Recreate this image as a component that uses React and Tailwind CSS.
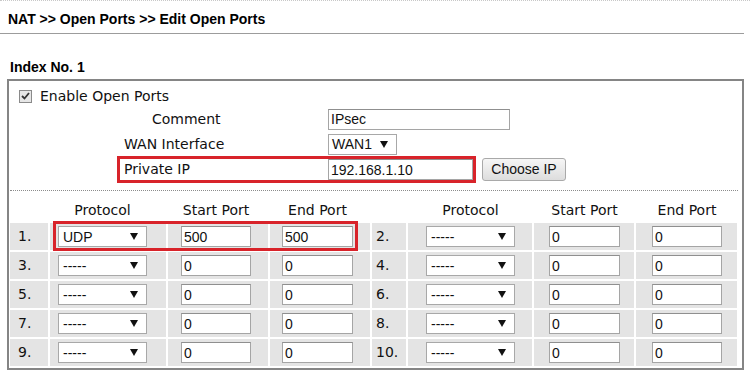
import React from "react";

const lbl = "font-['DejaVu_Sans','Verdana',sans-serif] text-[14px] text-[#111]";
const arial = "font-['Liberation_Sans','Arial',sans-serif] text-[14px] text-[#111]";

function Arrow() {
  return (
    <svg width="8" height="7" viewBox="0 0 8 7" className="shrink-0">
      <polygon points="0,0 8,0 4,7" fill="#111" />
    </svg>
  );
}

function Sel({ className, text }) {
  return (
    <div
      className={`flex h-[21px] items-center justify-between border border-[#a8a8a8] bg-white pl-[4px] pr-[8px] ${arial} ${className}`}
    >
      <span className="leading-none">{text}</span>
      <Arrow />
    </div>
  );
}

function Inp({ className, value }) {
  return (
    <div
      className={`flex h-[21px] items-center border border-[#a5a5a5] border-t-[#8f8f8f] bg-white pl-[2px] ${arial} ${className}`}
    >
      <span className="leading-none">{value}</span>
    </div>
  );
}

const grid =
  "grid grid-cols-[38px_116px_100px_100px_34px_124px_100px_101px] gap-x-[2px]";
const cell = "flex h-[27px] items-center bg-[#e4e4e4]";

function Row({ a, b, highlight }) {
  return (
    <div className="relative">
      <div className={grid}>
        <div className={`${cell} pl-[8px] ${lbl}`}>{a.n}.</div>
        <div className={`${cell} pl-[8px]`}>
          <Sel className="w-[89px]" text={a.p} />
        </div>
        <div className={`${cell} pl-[13px]`}>
          <Inp className="w-[70px]" value={a.s} />
        </div>
        <div className={`${cell} pl-[12px]`}>
          <Inp className="w-[71px]" value={a.e} />
        </div>
        <div className={`${cell} pl-[4px] ${lbl}`}>{b.n}.</div>
        <div className={`${cell} pl-[18px]`}>
          <Sel className="w-[89px]" text={b.p} />
        </div>
        <div className={`${cell} pl-[15px]`}>
          <Inp className="w-[71px]" value={b.s} />
        </div>
        <div className={`${cell} pl-[16px]`}>
          <Inp className="w-[70px]" value={b.e} />
        </div>
      </div>
      {highlight && (
        <div className="pointer-events-none absolute left-[43px] top-[-2px] h-[30px] w-[305px] border-[3px] border-[#d8232a]" />
      )}
    </div>
  );
}

export default function App() {
  const rows = [
    [{ n: 1, p: "UDP", s: "500", e: "500" }, { n: 2, p: "-----", s: "0", e: "0" }, true],
    [{ n: 3, p: "-----", s: "0", e: "0" }, { n: 4, p: "-----", s: "0", e: "0" }],
    [{ n: 5, p: "-----", s: "0", e: "0" }, { n: 6, p: "-----", s: "0", e: "0" }],
    [{ n: 7, p: "-----", s: "0", e: "0" }, { n: 8, p: "-----", s: "0", e: "0" }],
    [{ n: 9, p: "-----", s: "0", e: "0" }, { n: 10, p: "-----", s: "0", e: "0" }],
  ];
  return (
    <div className="h-[377px] w-[750px] overflow-hidden border-t border-dotted border-[#c8c8c8] bg-white">
      <div className="pl-[8px] pt-[9px] font-['Liberation_Sans','Arial',sans-serif] text-[14px] font-bold leading-[18px] text-black">
        NAT &gt;&gt; Open Ports &gt;&gt; Edit Open Ports
      </div>
      <div className="mt-[5px] h-px w-[744px] bg-[#9c9c9c]" />
      <div className="ml-[10px] mt-[24px] font-['Liberation_Sans','Arial',sans-serif] text-[14px] font-bold leading-[18px] text-black">
        Index No. 1
      </div>
      <div className="ml-[7px] mt-[3px] h-[291px] w-[737px] border-2 border-[#858585] pt-[3px]">
        {/* enable row */}
        <div className="flex h-[24px] items-center pl-[10px]">
          <div className="flex h-[13px] w-[13px] items-center justify-center border border-[#8a8a8a] bg-[#e6e6e6]">
            <svg width="9" height="8" viewBox="0 0 9 8">
              <path d="M1 4 L3.5 6.5 L8 1" stroke="#333" strokeWidth="1.8" fill="none" />
            </svg>
          </div>
          <span className={`ml-[8px] ${lbl}`}>Enable Open Ports</span>
        </div>
        {/* comment */}
        <div className="flex h-[22px] items-center">
          <span className={`ml-[143px] w-[176px] ${lbl}`}>Comment</span>
          <Inp className="w-[182px]" value="IPsec" />
        </div>
        {/* wan */}
        <div className="mt-[3px] flex h-[22px] items-center">
          <span className={`ml-[115px] w-[204px] ${lbl}`}>WAN Interface</span>
          <div className={`flex h-[21px] w-[69px] items-center justify-between border border-[#a8a8a8] bg-white pl-[3px] pr-[8px] ${arial}`}>
            <span className="leading-none">WAN1</span>
            <Arrow />
          </div>
        </div>
        {/* private ip */}
        <div className="mt-[1px] flex h-[27px] items-center">
          <div className="ml-[108px] flex h-[27px] w-[359px] items-center border-[3px] border-[#d8232a]">
            <span className={`w-[208px] pl-[4px] ${lbl}`}>Private IP</span>
            <Inp className="w-[145px]" value="192.168.1.10" />
          </div>
          <button className={`ml-[6px] h-[23px] w-[84px] rounded-[3px] border border-[#a9a9a9] bg-gradient-to-b from-[#f6f6f6] to-[#dddddd] ${arial}`}>
            Choose IP
          </button>
        </div>
        {/* divider */}
        <div className="ml-[1px] mt-[7px] h-px w-[728px] border-t border-dotted border-[#8c8c8c]" />
        {/* table */}
        <div className="ml-[1px] mt-[9px]">
          <div className={`${grid} h-[21px] items-center ${lbl}`}>
            <div />
            <div className="pl-[8px]"><div className="w-[89px] text-center">Protocol</div></div>
            <div className="pl-[13px]"><div className="w-[70px] whitespace-nowrap text-center">Start Port</div></div>
            <div className="pl-[12px]"><div className="w-[71px] whitespace-nowrap text-center">End Port</div></div>
            <div />
            <div className="pl-[18px]"><div className="w-[89px] text-center">Protocol</div></div>
            <div className="pl-[15px]"><div className="w-[71px] whitespace-nowrap text-center">Start Port</div></div>
            <div className="pl-[16px]"><div className="w-[70px] whitespace-nowrap text-center">End Port</div></div>
          </div>
          <div className="mt-[2px] flex flex-col gap-[2px]">
            {rows.map((r, i) => (
              <Row key={i} a={r[0]} b={r[1]} highlight={r[2]} />
            ))}
          </div>
        </div>
      </div>
    </div>
  );
}
